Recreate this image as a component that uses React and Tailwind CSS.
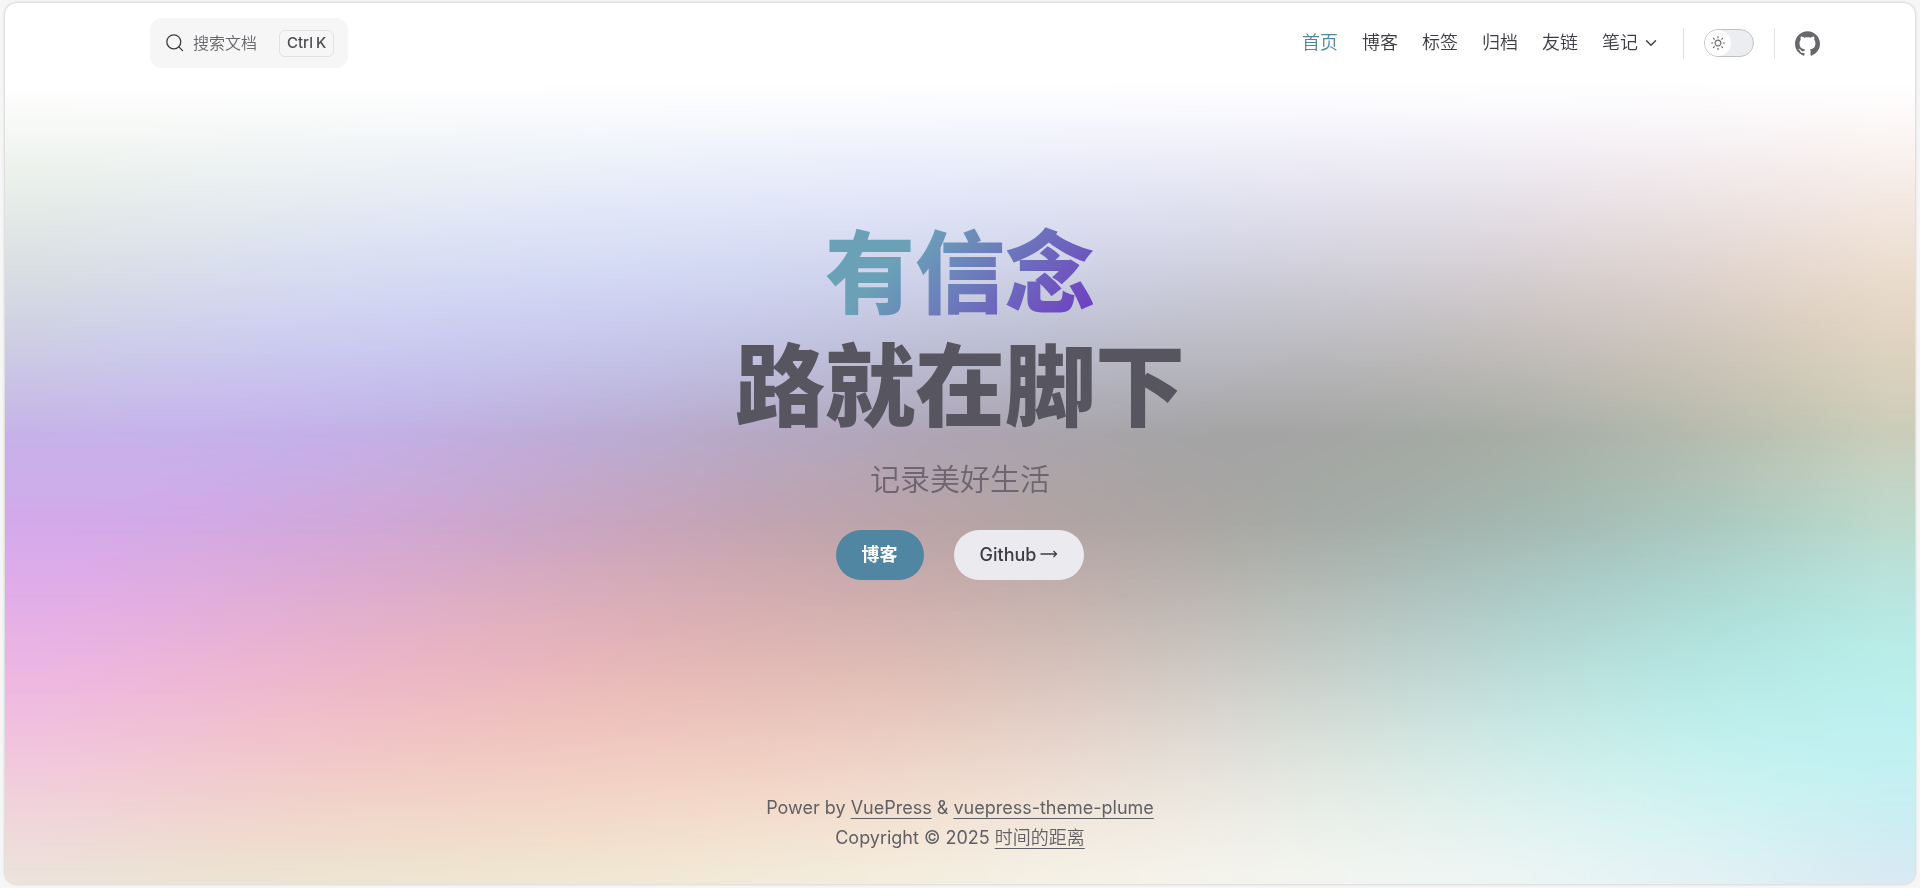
import { useEffect, useRef, useState } from "react";

const GRID = 32;
const PHASE = 14.78;
const BASE = 200;
const SPREAD = 36;

function tintAt(x, y, t) {
  const r = BASE + SPREAD * Math.cos((x * x - y * y) / 300 + t);
  const g = BASE + SPREAD * Math.sin((x * x * Math.cos(t / 4) + y * y * Math.sin(t / 3)) / 300);
  const b =
    BASE +
    SPREAD * Math.sin(5 * Math.sin(t / 9) + ((x - 100) * (x - 100) + (y - 100) * (y - 100)) / 1100);
  return `rgb(${Math.floor(r)}, ${Math.floor(g)}, ${Math.floor(b)})`;
}

function TintPlate() {
  const ref = useRef(null);

  useEffect(() => {
    const ctx = ref.current.getContext("2d");
    for (let x = 0; x < GRID; x++) {
      for (let y = 0; y < GRID; y++) {
        ctx.fillStyle = tintAt(x, y, PHASE);
        ctx.fillRect(x, y, 1, 1);
      }
    }
  }, []);

  return (
    <div aria-hidden="true" className="absolute inset-x-0 top-[69px] bottom-0">
      <canvas ref={ref} width={GRID} height={GRID} className="block h-full w-full" />
      <div className="absolute inset-0 bg-[linear-gradient(to_bottom,#fff_0%,#fff_1%,rgba(255,255,255,0.95)_4%,transparent_45%,transparent_55%,rgba(255,255,255,0.5)_100%)]" />
    </div>
  );
}

function SearchIcon() {
  return (
    <svg viewBox="0 0 20 20" className="size-5 text-[#3c3c43]" fill="none" stroke="currentColor" strokeWidth="1.3" aria-hidden="true">
      <circle cx="8.8" cy="8.8" r="7" />
      <path d="m13.9 13.9 3.7 3.7" strokeLinecap="round" />
    </svg>
  );
}

function SunIcon() {
  return (
    <svg viewBox="0 0 24 24" className="size-[14px] text-[#67676c]" fill="currentColor" aria-hidden="true">
      <path d="M12 18c-3.3 0-6-2.7-6-6s2.7-6 6-6 6 2.7 6 6-2.7 6-6 6zm0-10c-2.2 0-4 1.8-4 4s1.8 4 4 4 4-1.8 4-4-1.8-4-4-4zM12 4c-.6 0-1-.4-1-1V1c0-.6.4-1 1-1s1 .4 1 1v2c0 .6-.4 1-1 1zM12 24c-.6 0-1-.4-1-1v-2c0-.6.4-1 1-1s1 .4 1 1v2c0 .6-.4 1-1 1zM5.6 6.6c-.3 0-.5-.1-.7-.3L3.5 4.9c-.4-.4-.4-1 0-1.4s1-.4 1.4 0l1.4 1.4c.4.4.4 1 0 1.4-.2.2-.4.3-.7.3zM19.8 20.8c-.3 0-.5-.1-.7-.3l-1.4-1.4c-.4-.4-.4-1 0-1.4s1-.4 1.4 0l1.4 1.4c.4.4.4 1 0 1.4-.2.2-.5.3-.7.3zM3 13H1c-.6 0-1-.4-1-1s.4-1 1-1h2c.6 0 1 .4 1 1s-.4 1-1 1zM23 13h-2c-.6 0-1-.4-1-1s.4-1 1-1h2c.6 0 1 .4 1 1s-.4 1-1 1zM4.2 20.8c-.3 0-.5-.1-.7-.3-.4-.4-.4-1 0-1.4l1.4-1.4c.4-.4 1-.4 1.4 0s.4 1 0 1.4l-1.4 1.4c-.2.2-.4.3-.7.3zM18.4 6.6c-.3 0-.5-.1-.7-.3-.4-.4-.4-1 0-1.4l1.4-1.4c.4-.4 1-.4 1.4 0s.4 1 0 1.4l-1.4 1.4c-.2.2-.5.3-.7.3z" />
    </svg>
  );
}

function GithubIcon() {
  return (
    <svg viewBox="0 0 24 24" className="size-[25px]" fill="currentColor" aria-hidden="true">
      <path d="M12 .297c-6.63 0-12 5.373-12 12 0 5.303 3.438 9.8 8.205 11.385.6.113.82-.258.82-.577 0-.285-.01-1.04-.015-2.04-3.338.724-4.042-1.61-4.042-1.61C4.422 18.07 3.633 17.7 3.633 17.7c-1.087-.744.084-.729.084-.729 1.205.084 1.838 1.236 1.838 1.236 1.07 1.835 2.809 1.305 3.495.998.108-.776.417-1.305.76-1.605-2.665-.3-5.466-1.332-5.466-5.93 0-1.31.465-2.38 1.235-3.22-.135-.303-.54-1.523.105-3.176 0 0 1.005-.322 3.3 1.23.96-.267 1.98-.399 3-.405 1.02.006 2.04.138 3 .405 2.28-1.552 3.285-1.23 3.285-1.23.645 1.653.24 2.873.12 3.176.765.84 1.23 1.91 1.23 3.22 0 4.61-2.805 5.625-5.475 5.92.42.36.81 1.096.81 2.22 0 1.606-.015 2.896-.015 3.286 0 .315.21.69.825.57C20.565 22.092 24 17.592 24 12.297c0-6.627-5.373-12-12-12" />
    </svg>
  );
}

function ChevronIcon() {
  return (
    <svg viewBox="0 0 12 12" className="size-3" fill="none" stroke="currentColor" strokeWidth="1.4" strokeLinecap="round" strokeLinejoin="round" aria-hidden="true">
      <path d="m1.5 3.7 4.5 4.5 4.5-4.5" />
    </svg>
  );
}

const NAV = ["首页", "博客", "标签", "归档", "友链"];

function NavBar() {
  const [dark, setDark] = useState(false);
  return (
    <header className="relative flex h-[80px] items-center justify-between pr-[95px] pl-[145px]">
      <button type="button" className="flex h-[50px] items-center rounded-xl bg-[#f6f6f7] pr-[14px] pl-[15px]">
        <SearchIcon />
        <span className="ml-2 text-[16px] font-[350] text-[#67676c]">搜索文档</span>
        <kbd className="ml-[22px] flex h-[27px] items-center gap-[3px] rounded-md border border-[#e2e2e3] px-[7px] font-[inherit] text-[15px] font-medium text-[#4c4c52]">
          <span>Ctrl</span>
          <span>K</span>
        </kbd>
      </button>

      <div className="flex items-center">
        <nav className="flex items-center gap-6 text-[18px] leading-6 font-[350] text-[#3c3c43]" aria-label="主导航">
          {NAV.map((label, i) => (
            <a key={label} href="#" className={i === 0 ? "text-[#5086a1]" : ""}>
              {label}
            </a>
          ))}
          <button type="button" className="flex items-center gap-[7px]">
            笔记
            <ChevronIcon />
          </button>
        </nav>
        <span className="mr-5 ml-[26px] h-[31px] w-px bg-[#e2e2e3]" />
        <button
          type="button"
          role="switch"
          aria-checked={dark}
          aria-label="切换深色模式"
          onClick={() => setDark(!dark)}
          className="flex h-7 w-[50px] items-center rounded-full border border-[#c2c2c4] bg-[#ebedf0]"
        >
          <span className={`grid size-[26px] place-items-center rounded-full bg-white ${dark ? "ml-auto" : ""}`}>
            <SunIcon />
          </span>
        </button>
        <span className="mx-5 h-[31px] w-px bg-[#e2e2e3]" />
        <a href="#" aria-label="GitHub" className="text-[#67676c]">
          <GithubIcon />
        </a>
      </div>
    </header>
  );
}

export default function App() {
  return (
    <div className="flex min-h-screen flex-col bg-[#f6f6f7] px-[5px] pt-[3px] pb-1 font-['Inter','Noto_Sans_CJK_SC',sans-serif]">
      <div className="relative isolate flex flex-1 flex-col overflow-hidden rounded-xl bg-white shadow-[0_0_3px_rgba(0,0,0,0.25)]">
        <TintPlate />
        <NavBar />

        <main className="relative flex flex-1 flex-col items-center pt-[134px] text-center">
          <h1 className="text-[90px] leading-[113px] font-black text-[#575660]">
            <span className="block">
              <span className="bg-[linear-gradient(315deg,#6f42c1_8%,#6aa1b7_70%)] bg-clip-text text-transparent">有信念</span>
            </span>
            <span className="block">路就在脚下</span>
          </h1>
          <p className="mt-[14px] text-[30px] leading-[45px] font-[350] text-[#6d656f]">记录美好生活</p>
          <div className="mt-7 flex gap-[30px] text-[18px] leading-6">
            <a href="#" className="flex h-[50px] items-center rounded-full bg-[#5086a1] px-[26px] font-bold text-white">
              博客
            </a>
            <a href="#" className="flex h-[50px] items-center gap-1 rounded-full bg-[#ebebef] px-[26px] font-medium text-[#3c3c43]">
              Github
              <svg viewBox="0 0 18 12" className="h-3 w-[18px]" fill="none" stroke="currentColor" strokeWidth="1.3" aria-hidden="true">
                <path d="M.5 5h16M13.5 2 16.5 5l-3 3" />
              </svg>
            </a>
          </div>
        </main>

        <footer className="relative pb-[31px] text-center text-[18px] leading-[30px] text-[#5f5f64]">
          <p>
            Power by{" "}
            <a href="#" className="underline underline-offset-4">VuePress</a> &amp;{" "}
            <a href="#" className="underline underline-offset-4">vuepress-theme-plume</a>
          </p>
          <p>
            Copyright © 2025 <a href="#" className="font-[350] underline underline-offset-4">时间的距离</a>
          </p>
        </footer>
      </div>
    </div>
  );
}
